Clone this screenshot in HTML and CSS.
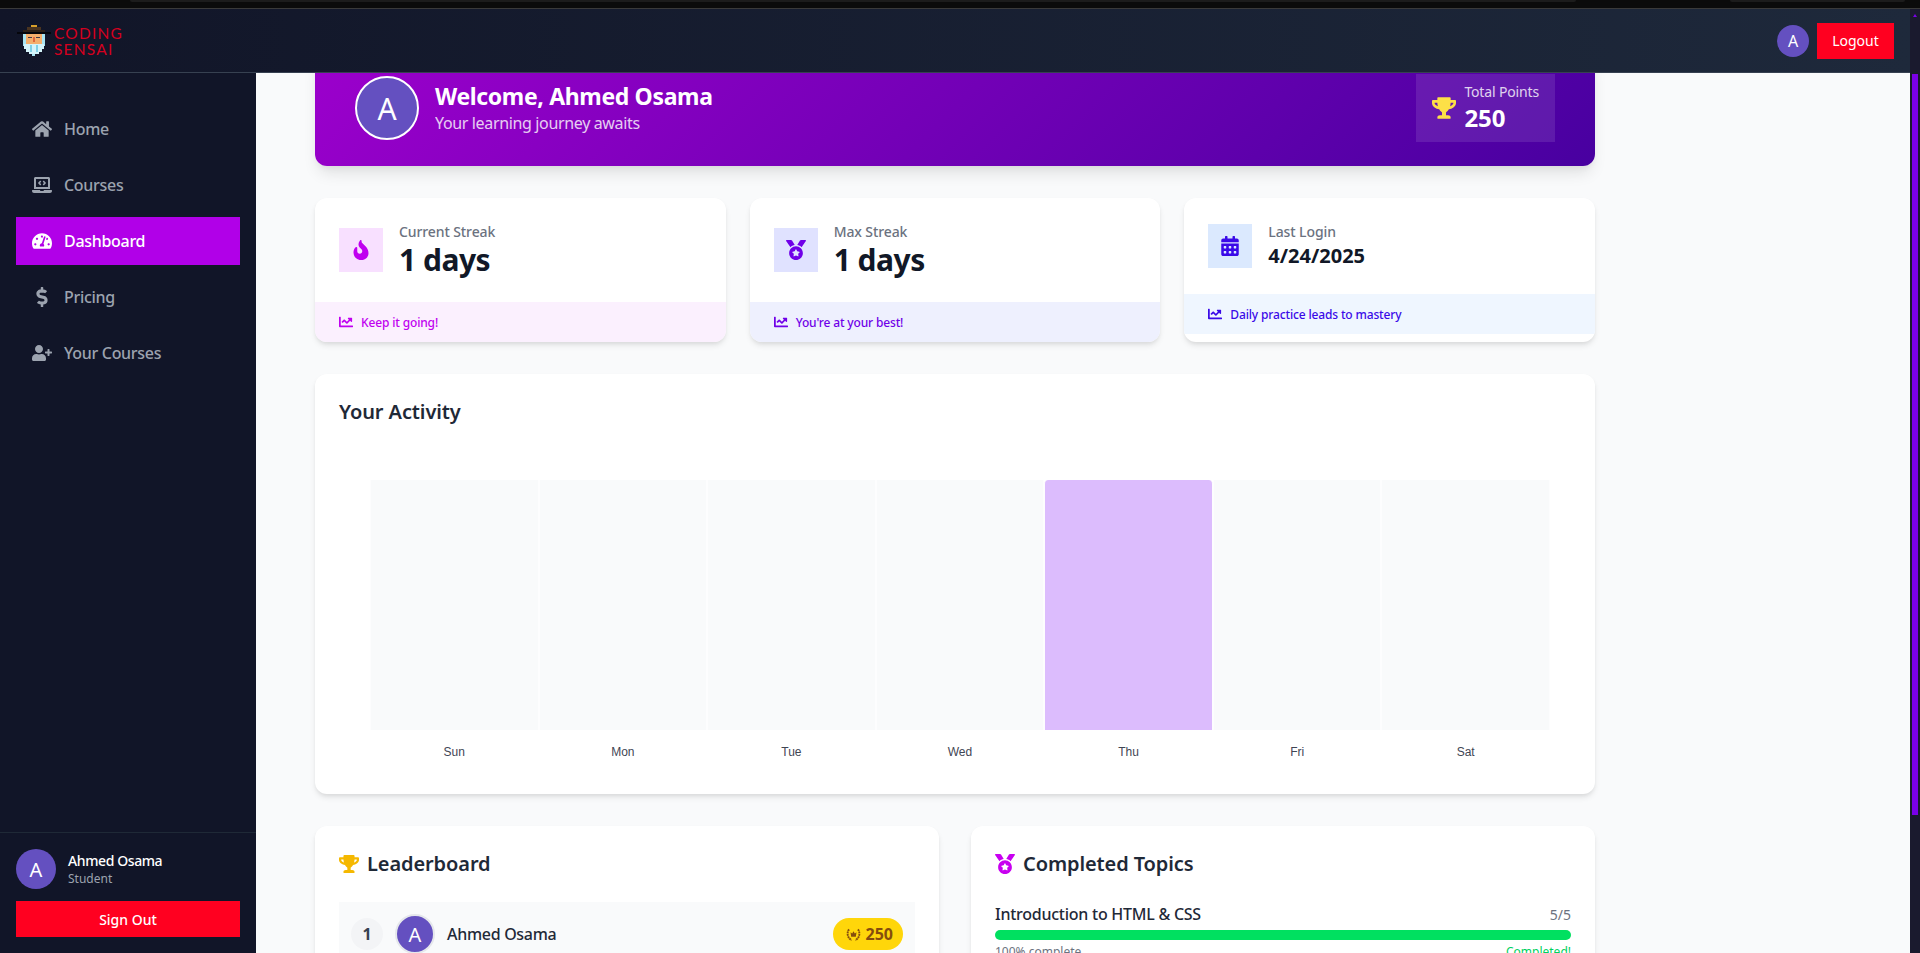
FILE: index.html
```html
<!DOCTYPE html>
<html lang="en">

<head>
    <meta charset="UTF-8">
    <meta name="viewport" content="width=device-width, initial-scale=1.0">
    <title>Coding Sensai - Dashboard</title>
    <link rel="stylesheet" href="styles.css">
</head>

<body>
    <!-- icon sprite -->
    <svg class="sprite" xmlns="http://www.w3.org/2000/svg">
        <symbol id="i-home" viewBox="0 0 576 512"><path d="M280.37 148.26L96 300.11V464a16 16 0 0 0 16 16l112.06-.29a16 16 0 0 0 15.92-16V368a16 16 0 0 1 16-16h64a16 16 0 0 1 16 16v95.64a16 16 0 0 0 16 16.05L464 480a16 16 0 0 0 16-16V300L295.67 148.26a12.19 12.19 0 0 0-15.3 0zM571.6 251.47L488 182.56V44.05a12 12 0 0 0-12-12h-56a12 12 0 0 0-12 12v72.61L318.47 43a48 48 0 0 0-61 0L4.34 251.47a12 12 0 0 0-1.6 16.9l25.5 31A12 12 0 0 0 45.15 301l235.22-193.74a12.19 12.19 0 0 1 15.3 0L530.9 301a12 12 0 0 0 16.9-1.6l25.5-31a12 12 0 0 0-1.7-16.93z"/></symbol>
        <symbol id="i-laptop" viewBox="0 0 640 512"><path d="M255.03 261.65c6.25 6.25 16.38 6.25 22.63 0l11.31-11.31c6.25-6.25 6.25-16.38 0-22.63L253.25 192l35.71-35.72c6.25-6.25 6.25-16.38 0-22.63l-11.31-11.31c-6.25-6.25-16.38-6.25-22.63 0l-58.34 58.34c-6.25 6.25-6.25 16.38 0 22.63l58.35 58.34zm96.01-11.3l11.31 11.31c6.25 6.25 16.38 6.25 22.63 0l58.34-58.34c6.25-6.25 6.25-16.38 0-22.63l-58.34-58.34c-6.25-6.25-16.38-6.25-22.63 0l-11.31 11.31c-6.25 6.25-6.25 16.38 0 22.63L386.75 192l-35.71 35.72c-6.25 6.25-6.25 16.38 0 22.63zM624 416H381.54c-.74 19.81-14.71 32-32.74 32H288c-18.69 0-33.02-17.47-32.77-32H16c-8.8 0-16 7.2-16 16v16c0 35.2 28.8 64 64 64h512c35.2 0 64-28.8 64-64v-16c0-8.8-7.2-16-16-16zM576 48c0-26.4-21.6-48-48-48H112C85.6 0 64 21.6 64 48v336h512V48zm-64 272H128V64h384v256z"/></symbol>
        <symbol id="i-gauge" viewBox="0 0 576 512"><path d="M288 32C128.94 32 0 160.94 0 320c0 52.8 14.25 102.26 39.06 144.8 5.61 9.62 16.3 15.2 27.44 15.2h443c11.14 0 21.83-5.58 27.44-15.2C561.75 422.26 576 372.8 576 320c0-159.06-128.94-288-288-288zm0 64c14.71 0 26.58 10.13 30.32 23.65-1.11 2.26-2.64 4.23-3.45 6.67l-9.22 27.67c-5.13 3.49-10.97 6.01-17.64 6.01-17.67 0-32-14.33-32-32S270.33 96 288 96zM96 384c-17.67 0-32-14.33-32-32s14.33-32 32-32 32 14.33 32 32-14.33 32-32 32zm48-160c-17.67 0-32-14.33-32-32s14.33-32 32-32 32 14.33 32 32-14.33 32-32 32zm246.77-72.41l-61.33 184C343.13 347.33 352 364.54 352 384c0 11.72-3.38 22.55-8.88 32H232.88c-5.5-9.45-8.88-20.28-8.88-32 0-33.94 26.5-61.43 59.9-63.59l61.34-184.01c4.17-12.56 17.73-19.45 30.36-15.17 12.57 4.19 19.35 17.77 15.17 30.36zm14.66 57.2l15.52-46.55c3.47-1.29 7.13-2.23 11.05-2.23 17.67 0 32 14.33 32 32s-14.33 32-32 32c-11.38-.01-20.89-6.28-26.57-15.22zM480 384c-17.67 0-32-14.33-32-32s14.33-32 32-32 32 14.33 32 32-14.33 32-32 32z"/></symbol>
        <symbol id="i-dollar" viewBox="0 0 288 512"><path d="M209.2 233.4l-108-31.6C88.7 198.2 80 186.5 80 173.5c0-16.3 13.2-29.5 29.5-29.5h66.3c12.2 0 24.2 3.7 34.2 10.5 6.1 4.1 14.3 3.1 19.5-2l34.8-34c7.1-6.9 6.1-18.4-1.8-24.5C238 74.8 207.4 64.1 176 64V16c0-8.8-7.2-16-16-16h-32c-8.8 0-16 7.2-16 16v48h-2.5C45.8 64-5.4 118.7.5 183.6c4.2 46.1 39.4 83.6 83.8 96.6l102.5 30c12.5 3.7 21.2 15.3 21.2 28.3 0 16.3-13.2 29.5-29.5 29.5h-66.3C100 368 88 364.3 78 357.5c-6.1-4.1-14.3-3.1-19.5 2l-34.8 34c-7.1 6.9-6.1 18.4 1.8 24.5 24.5 19.2 55.1 29.9 86.5 30v48c0 8.8 7.2 16 16 16h32c8.8 0 16-7.2 16-16v-48.2c46.6-.9 90.3-28.6 105.7-72.7 21.5-61.6-14.6-124.8-72.5-141.7z"/></symbol>
        <symbol id="i-userplus" viewBox="0 0 640 512"><path d="M624 208h-64v-64c0-8.8-7.2-16-16-16h-32c-8.8 0-16 7.2-16 16v64h-64c-8.8 0-16 7.2-16 16v32c0 8.8 7.2 16 16 16h64v64c0 8.8 7.2 16 16 16h32c8.8 0 16-7.2 16-16v-64h64c8.8 0 16-7.2 16-16v-32c0-8.8-7.2-16-16-16zm-400 48c70.7 0 128-57.3 128-128S294.7 0 224 0 96 57.3 96 128s57.3 128 128 128zm89.6 32h-16.7c-22.2 10.2-46.9 16-72.9 16s-50.6-5.8-72.9-16h-16.7C60.2 288 0 348.2 0 422.4V464c0 26.5 21.5 48 48 48h352c26.5 0 48-21.5 48-48v-41.6c0-74.2-60.2-134.4-134.4-134.4z"/></symbol>
        <symbol id="i-trophy" viewBox="0 0 576 512"><path d="M552 64H448V24c0-13.3-10.7-24-24-24H152c-13.3 0-24 10.7-24 24v40H24C10.7 64 0 74.7 0 88v56c0 35.7 22.5 72.4 61.9 100.7 31.5 22.7 69.8 37.1 110 41.7C203.3 338.5 240 360 240 360v72h-48c-35.3 0-64 20.7-64 56v12c0 6.6 5.4 12 12 12h296c6.6 0 12-5.4 12-12v-12c0-35.3-28.7-56-64-56h-48v-72s36.7-21.5 68.1-73.6c40.3-4.6 78.6-19 110-41.7 39.3-28.3 61.9-65 61.9-100.7V88c0-13.3-10.7-24-24-24zM99.3 192.8C74.9 175.2 64 155.6 64 144v-16h64.2c1 32.6 5.8 61.2 12.8 86.2-15.1-5.2-29.2-12.4-41.7-21.4zM512 144c0 16.1-17.7 36.1-35.3 48.8-12.5 9-26.7 16.2-41.8 21.4 7-25 11.8-53.6 12.8-86.2H512v16z"/></symbol>
        <symbol id="i-fire" viewBox="0 0 384 512"><path d="M153.6 29.9l16-21.3C173.6 3.2 180 0 186.7 0C198.4 0 208 9.6 208 21.3V43.500c0 13.100 5.400 25.700 14.900 34.700L307.600 159C356.400 205.600 384 270.200 384 337.700C384 434 306 512 209.700 512H192C86 512 0 426 0 320v-3.800c0-48.800 19.400-95.600 53.900-130.100l3.500-3.500c4.200-4.200 10-6.600 16-6.600C85.900 176 96 186.100 96 198.600V288c0 35.300 28.700 64 64 64s64-28.700 64-64v-3.900c0-18-7.200-35.300-19.900-48l-38.600-38.600c-24-24-37.500-56.700-37.500-90.700c0-27.700 9-54.800 25.600-76.900z"/></symbol>
        <symbol id="i-medal" viewBox="0 0 512 512"><path d="M223.75 130.75L154.62 15.54A31.997 31.997 0 0 0 127.18 0H16.03C3.08 0-4.5 14.57 2.92 25.18l111.27 158.96c29.72-27.77 67.52-46.83 109.56-53.39zM495.97 0H384.82c-11.24 0-21.66 5.9-27.44 15.54l-69.13 115.21c42.04 6.56 79.84 25.62 109.56 53.38L509.08 25.18C516.5 14.57 508.92 0 495.97 0zM256 160c-97.2 0-176 78.8-176 176s78.8 176 176 176 176-78.8 176-176-78.8-176-176-176zm92.52 157.26l-37.93 36.96 8.97 52.22c1.6 9.36-8.26 16.51-16.65 12.09L256 393.88l-46.9 24.65c-8.4 4.45-18.25-2.74-16.65-12.09l8.97-52.22-37.93-36.96c-6.82-6.64-3.05-18.23 6.35-19.59l52.43-7.64 23.43-47.52c1.78-3.57 5.25-5.39 8.71-5.39 3.49 0 6.98 1.85 8.77 5.39l23.43 47.52 52.43 7.64c9.4 1.36 13.17 12.95 6.35 19.59z"/></symbol>
        <symbol id="i-calendar" viewBox="0 0 448 512"><path d="M0 464c0 26.5 21.5 48 48 48h352c26.5 0 48-21.5 48-48V192H0v272zm320-196c0-6.6 5.4-12 12-12h40c6.6 0 12 5.4 12 12v40c0 6.6-5.4 12-12 12h-40c-6.6 0-12-5.4-12-12v-40zm0 128c0-6.6 5.4-12 12-12h40c6.6 0 12 5.4 12 12v40c0 6.6-5.4 12-12 12h-40c-6.6 0-12-5.4-12-12v-40zM192 268c0-6.6 5.4-12 12-12h40c6.6 0 12 5.4 12 12v40c0 6.6-5.4 12-12 12h-40c-6.6 0-12-5.4-12-12v-40zm0 128c0-6.6 5.4-12 12-12h40c6.6 0 12 5.4 12 12v40c0 6.6-5.4 12-12 12h-40c-6.6 0-12-5.4-12-12v-40zM64 268c0-6.6 5.4-12 12-12h40c6.6 0 12 5.4 12 12v40c0 6.6-5.4 12-12 12H76c-6.6 0-12-5.4-12-12v-40zm0 128c0-6.6 5.4-12 12-12h40c6.6 0 12 5.4 12 12v40c0 6.6-5.4 12-12 12H76c-6.6 0-12-5.4-12-12v-40zM400 64h-48V16c0-8.8-7.2-16-16-16h-32c-8.8 0-16 7.2-16 16v48H160V16c0-8.8-7.2-16-16-16h-32c-8.8 0-16 7.2-16 16v48H48C21.5 64 0 85.5 0 112v48h448v-48c0-26.5-21.5-48-48-48z"/></symbol>
        <symbol id="i-chart" viewBox="0 0 512 512"><path d="M496 384H64V80c0-8.84-7.16-16-16-16H16C7.16 64 0 71.16 0 80v336c0 17.67 14.33 32 32 32h464c8.84 0 16-7.16 16-16v-32c0-8.84-7.16-16-16-16zM464 96H345.94c-21.38 0-32.09 25.85-16.97 40.97l32.4 32.4L288 242.75l-73.37-73.37c-12.5-12.5-32.76-12.5-45.25 0l-68.69 68.69c-6.25 6.25-6.25 16.38 0 22.63l22.62 22.62c6.25 6.25 16.38 6.25 22.63 0L192 237.25l73.37 73.37c12.5 12.5 32.76 12.5 45.25 0l96-96 32.4 32.4c15.12 15.12 40.97 4.41 40.97-16.97V112c.01-8.84-7.15-16-15.99-16z"/></symbol>
    </svg>

    <div class="window-strip"><span class="strip-tab"></span><span class="strip-tab short"></span></div>

    <div class="window">
        <div class="app">
            <header class="topbar">
                <a class="logo" href="#">
                    <svg class="logo-mascot" viewBox="0 0 34 31" shape-rendering="crispEdges" aria-hidden="true">
                        <rect x="14" y="0" width="6" height="2" fill="#d9a02b"/>
                        <rect x="10" y="2" width="14" height="3" fill="#4a3420"/>
                        <rect x="6" y="5" width="22" height="3" fill="#2d2118"/>
                        <rect x="0" y="7" width="34" height="2" fill="#05060c"/>
                        <rect x="6" y="9" width="22" height="12" fill="#a8e4f2"/>
                        <rect x="9" y="9" width="16" height="10" fill="#f4ae6c"/>
                        <rect x="11" y="12" width="4" height="1" fill="#3d3a4a"/>
                        <rect x="19" y="12" width="4" height="1" fill="#3d3a4a"/>
                        <rect x="16" y="12" width="2" height="5" fill="#e0683c"/>
                        <rect x="7" y="19" width="20" height="5" fill="#d4f3fa"/>
                        <rect x="9" y="24" width="16" height="3" fill="#d4f3fa"/>
                        <rect x="12" y="27" width="10" height="2" fill="#d4f3fa"/>
                        <rect x="15" y="29" width="3" height="2" fill="#a8e4f2"/>
                        <rect x="13" y="20" width="2" height="7" fill="#7fd0e6"/>
                        <rect x="19" y="20" width="2" height="7" fill="#7fd0e6"/>
                    </svg>
                    <span class="logo-text">CODING<br>SENSAI</span>
                </a>
                <div class="topbar-user">
                    <span class="avatar avatar-sm">A</span>
                    <button class="btn-red btn-logout">Logout</button>
                </div>
            </header>

            <div class="layout">
                <aside class="sidebar">
                    <nav class="side-nav">
                        <a href="#"><svg class="ico"><use href="#i-home"/></svg>Home</a>
                        <a href="#"><svg class="ico"><use href="#i-laptop"/></svg>Courses</a>
                        <a href="#" class="active"><svg class="ico"><use href="#i-gauge"/></svg>Dashboard</a>
                        <a href="#"><svg class="ico"><use href="#i-dollar"/></svg>Pricing</a>
                        <a href="#"><svg class="ico"><use href="#i-userplus"/></svg>Your Courses</a>
                    </nav>
                    <div class="side-footer">
                        <div class="side-user">
                            <span class="avatar avatar-md">A</span>
                            <div>
                                <p class="side-name">Ahmed Osama</p>
                                <p class="side-role">Student</p>
                            </div>
                        </div>
                        <button class="btn-red btn-signout">Sign Out</button>
                    </div>
                </aside>

                <main class="main">
                    <div class="content">
                        <section class="hero">
                            <div class="hero-user">
                                <span class="avatar avatar-lg">A</span>
                                <div>
                                    <h1>Welcome, Ahmed Osama</h1>
                                    <p>Your learning journey awaits</p>
                                </div>
                            </div>
                            <div class="points">
                                <svg class="ico points-ico"><use href="#i-trophy"/></svg>
                                <div>
                                    <p class="points-label">Total Points</p>
                                    <p class="points-value">250</p>
                                </div>
                            </div>
                        </section>

                        <section class="stats">
                            <article class="card stat stat-pink">
                                <div class="stat-body">
                                    <span class="stat-icon"><svg class="ico"><use href="#i-fire"/></svg></span>
                                    <div>
                                        <p class="stat-label">Current Streak</p>
                                        <p class="stat-value">1 days</p>
                                    </div>
                                </div>
                                <div class="stat-foot"><svg class="ico"><use href="#i-chart"/></svg>Keep it going!</div>
                            </article>
                            <article class="card stat stat-violet">
                                <div class="stat-body">
                                    <span class="stat-icon"><svg class="ico"><use href="#i-medal"/></svg></span>
                                    <div>
                                        <p class="stat-label">Max Streak</p>
                                        <p class="stat-value">1 days</p>
                                    </div>
                                </div>
                                <div class="stat-foot"><svg class="ico"><use href="#i-chart"/></svg>You're at your best!</div>
                            </article>
                            <article class="card stat stat-blue">
                                <div class="stat-body">
                                    <span class="stat-icon"><svg class="ico"><use href="#i-calendar"/></svg></span>
                                    <div>
                                        <p class="stat-label">Last Login</p>
                                        <p class="stat-value small">4/24/2025</p>
                                    </div>
                                </div>
                                <div class="stat-foot"><svg class="ico"><use href="#i-chart"/></svg>Daily practice leads to mastery</div>
                            </article>
                        </section>

                        <section class="card activity">
                            <h2>Your Activity</h2>
                            <div class="chart">
                                <div class="chart-col"><div class="bar"></div><span>Sun</span></div>
                                <div class="chart-col"><div class="bar"></div><span>Mon</span></div>
                                <div class="chart-col"><div class="bar"></div><span>Tue</span></div>
                                <div class="chart-col"><div class="bar"></div><span>Wed</span></div>
                                <div class="chart-col"><div class="bar on"></div><span>Thu</span></div>
                                <div class="chart-col"><div class="bar"></div><span>Fri</span></div>
                                <div class="chart-col"><div class="bar"></div><span>Sat</span></div>
                            </div>
                        </section>

                        <section class="bottom">
                            <div class="card panel">
                                <h2><svg class="ico gold"><use href="#i-trophy"/></svg>Leaderboard</h2>
                                <div class="rank-row">
                                    <span class="rank-num">1</span>
                                    <span class="avatar avatar-rank">A</span>
                                    <span class="rank-name">Ahmed Osama</span>
                                    <span class="rank-badge">
                                        <svg class="wreath" viewBox="0 0 16 16" aria-hidden="true">
                                            <path d="M3.2 2.5C.6 6 1.4 11.8 6 14M12.8 2.5C15.4 6 14.6 11.8 10 14" fill="none" stroke="currentColor" stroke-width="2" stroke-dasharray="2 .6"/>
                                            <path d="M4.8 5.5l1.8 1.5L8 4.500 9.400 7l1.800-1.500-.7 5h-5z" fill="currentColor"/>
                                        </svg>250
                                    </span>
                                </div>
                            </div>
                            <div class="card panel">
                                <h2><svg class="ico magenta"><use href="#i-medal"/></svg>Completed Topics</h2>
                                <div class="topic-head">
                                    <span class="topic-name">Introduction to HTML &amp; CSS</span>
                                    <span class="topic-count">5/5</span>
                                </div>
                                <div class="progress"><div class="progress-fill"></div></div>
                                <div class="topic-foot">
                                    <span>100% complete</span>
                                    <span class="done">Completed!</span>
                                </div>
                            </div>
                        </section>
                    </div>
                </main>
            </div>
        </div>

        <div class="scrollbar">
            <span class="scroll-arrow"></span>
            <div class="scroll-thumb"></div>
        </div>
    </div>
</body>

</html>
```

FILE: styles.css
```css
/* General Reset */
* {
    margin: 0;
    padding: 0;
    box-sizing: border-box;
}

html, body {
    height: 100%;
    overflow: hidden;
}

body {
    font-family: "Noto Sans", "Open Sans", sans-serif;
    background: #0a0a0a;
    color: #111827;
    display: flex;
    flex-direction: column;
}

a {
    text-decoration: none;
    color: inherit;
}

button {
    font-family: inherit;
    border: none;
    cursor: pointer;
}

.sprite {
    display: none;
}

.ico {
    display: block;
    width: 20px;
    height: 20px;
    fill: currentColor;
    flex-shrink: 0;
}

/* Top window strip */
.window-strip {
    height: 9px;
    flex-shrink: 0;
    display: flex;
    align-items: flex-start;
    gap: 154px;
    padding-left: 130px;
    background: #0b0b0b;
    border-bottom: 1px solid #3a3a3a;
}

.strip-tab {
    width: 1446px;
    height: 2px;
    background: #1c1c1c;
    border-radius: 0 0 6px 6px;
}

.strip-tab.short {
    width: 175px;
}

.window {
    flex: 1;
    min-height: 0;
    display: flex;
}

.app {
    flex: 1;
    min-width: 0;
    display: flex;
    flex-direction: column;
}

/* Scrollbar */
.scrollbar {
    width: 10px;
    background: #1a1a2e;
    display: flex;
    flex-direction: column;
    align-items: center;
}

.scroll-arrow {
    margin-top: 5px;
    border-left: 2.5px solid transparent;
    border-right: 2.5px solid transparent;
    border-bottom: 3px solid #7a00e8;
}

.scroll-thumb {
    width: 6px;
    height: 741px;
    margin-top: 57px;
    background: #7a00e8;
}

/* Navbar */
.topbar {
    height: 64px;
    flex-shrink: 0;
    display: flex;
    align-items: center;
    justify-content: space-between;
    padding: 0 16px 0 17px;
    background: linear-gradient(to right, #111528, #1e293b);
    border-bottom: 1px solid #374151;
}

.logo {
    display: flex;
    align-items: center;
    gap: 3px;
}

.logo-mascot {
    width: 34px;
    height: 31px;
}

.logo-text {
    font-family: "Lato", sans-serif;
    font-weight: 400;
    font-size: 15.5px;
    line-height: 16px;
    letter-spacing: 1.2px;
    color: #d4001f;
}

.topbar-user {
    display: flex;
    align-items: center;
    gap: 8px;
}

.avatar {
    display: flex;
    align-items: center;
    justify-content: center;
    flex-shrink: 0;
    border-radius: 50%;
    background: #6450c0;
    color: #fff;
}

.avatar-sm {
    width: 32px;
    height: 32px;
    font-size: 16px;
}

.avatar-md {
    width: 40px;
    height: 40px;
    font-size: 20px;
}

.avatar-lg {
    width: 64px;
    height: 64px;
    font-size: 30px;
    border: 2px solid #fff;
}

.avatar-rank {
    width: 40px;
    height: 40px;
    font-size: 20px;
    border: 2px solid #e5e7eb;
}

.btn-red {
    background: #ff0020;
    color: #fff;
    font-size: 14px;
    font-weight: 500;
}

.btn-logout {
    width: 77px;
    height: 36px;
    font-weight: 400;
}

.btn-signout {
    width: 100%;
    height: 36px;
}

/* Layout */
.layout {
    flex: 1;
    min-height: 0;
    display: flex;
}

.sidebar {
    width: 256px;
    flex-shrink: 0;
    background: #111528;
    display: flex;
    flex-direction: column;
    justify-content: space-between;
}

.side-nav {
    padding: 32px 16px;
    display: flex;
    flex-direction: column;
    gap: 8px;
}

.side-nav a {
    height: 48px;
    display: flex;
    align-items: center;
    gap: 12px;
    padding: 0 16px;
    font-size: 16px;
    font-weight: 500;
    letter-spacing: -0.3px;
    color: #9ca3af;
}

.side-nav a.active {
    background: #b100e8;
    color: #fff;
}

.side-footer {
    border-top: 1px solid #1f2937;
    padding: 16px;
}

.side-user {
    display: flex;
    align-items: center;
    gap: 12px;
    margin-bottom: 12px;
}

.side-name {
    font-size: 14px;
    line-height: 20px;
    font-weight: 500;
    letter-spacing: -0.4px;
    color: #fff;
}

.side-role {
    font-size: 12px;
    line-height: 16px;
    color: #9ca3af;
}

/* Main content */
.main {
    flex: 1;
    min-width: 0;
    overflow: hidden;
    background: #f9fafb;
    padding-left: 59px;
}

.content {
    width: 1280px;
    margin-top: -23px; /* page is scrolled a little under the navbar */
    display: flex;
    flex-direction: column;
    gap: 32px;
}

.card {
    background: #fff;
    border-radius: 12px;
    box-shadow: 0 4px 6px -1px rgba(0, 0, 0, 0.1), 0 2px 4px -1px rgba(0, 0, 0, 0.06);
    overflow: hidden;
}

.hero {
    height: 116px;
    flex-shrink: 0;
    display: flex;
    align-items: center;
    justify-content: space-between;
    padding: 0 40px;
    color: #fff;
    border-radius: 12px;
    background: linear-gradient(135deg, #9c00cc, #4800a0);
    box-shadow: 0 10px 15px -3px rgba(0, 0, 0, 0.1), 0 4px 6px -2px rgba(0, 0, 0, 0.05);
}

.hero-user {
    display: flex;
    align-items: center;
    gap: 16px;
}

.hero h1 {
    font-size: 23px;
    line-height: 30px;
    font-weight: 700;
    letter-spacing: -0.35px;
}

.hero p {
    font-size: 16px;
    line-height: 24px;
    letter-spacing: -0.35px;
    opacity: 0.8;
}

.points {
    display: flex;
    align-items: center;
    gap: 8px;
    padding: 8px 16px;
    background: rgba(255, 255, 255, 0.1);
}

.points-ico {
    width: 24px;
    height: 22px;
    color: #fde047;
}

.points .points-label {
    font-size: 14px;
    line-height: 20px;
    letter-spacing: -0.15px;
}

.points .points-value {
    font-size: 24px;
    line-height: 32px;
    font-weight: 700;
    letter-spacing: 0;
    opacity: 1;
}

/* Stat cards */
.stats {
    display: grid;
    grid-template-columns: repeat(3, 1fr);
    gap: 24px;
}

.stat-body {
    display: flex;
    align-items: center;
    gap: 16px;
    padding: 24px;
}

.stat-icon {
    width: 44px;
    height: 44px;
    display: flex;
    align-items: center;
    justify-content: center;
}

.stat-label {
    font-size: 14px;
    line-height: 20px;
    font-weight: 500;
    letter-spacing: -0.1px;
    color: #6b7280;
}

.stat-value {
    font-size: 30px;
    line-height: 36px;
    font-weight: 700;
    letter-spacing: -0.5px;
    color: #111827;
}

.stat-value.small {
    font-size: 20px;
    line-height: 28px;
    letter-spacing: 0;
}

.stat-foot {
    height: 40px;
    display: flex;
    align-items: center;
    gap: 8px;
    padding: 0 24px;
    font-size: 12px;
    font-weight: 500;
    letter-spacing: -0.15px;
}

.stat-foot .ico {
    width: 14px;
    height: 14px;
}

.stat-pink .stat-icon { background: #f8e0ff; color: #c000f0; }
.stat-pink .stat-foot { background: #fbf0fe; color: #c000f0; }
.stat-violet .stat-icon { background: #e0e2ff; color: #7000e8; }
.stat-violet .stat-foot { background: #eef0fe; color: #7000e8; }
.stat-blue .stat-icon { background: #dbe9fe; color: #3a0ae8; }
.stat-blue .stat-foot { background: #eff6ff; color: #3a0ae8; }

/* Activity chart */
.activity {
    height: 420px;
    padding: 24px;
}

.activity h2,
.panel h2 {
    font-size: 20px;
    line-height: 28px;
    font-weight: 600;
    letter-spacing: -0.1px;
    color: #1f2937;
}

.chart {
    display: grid;
    grid-template-columns: repeat(7, 1fr);
    margin-top: 54px;
    padding: 0 21px 0 31px;
}

.chart-col {
    display: flex;
    flex-direction: column;
    align-items: center;
    font-family: "Liberation Sans", Arial, sans-serif;
    font-size: 12px;
    line-height: 16px;
    color: #3f4654;
}

.bar {
    width: 100%;
    height: 250px;
    margin-bottom: 14px;
    background: #f9fafb;
    border-left: 1px solid #fdfdfe;
    border-right: 1px solid #fdfdfe;
}

.bar.on {
    background: #dcbcfd;
    border-radius: 4px 4px 0 0;
}

/* Bottom panels */
.bottom {
    display: grid;
    grid-template-columns: 1fr 1fr;
    gap: 32px;
}

.panel {
    height: 300px;
    padding: 24px;
}

.panel h2 {
    display: flex;
    align-items: center;
    gap: 8px;
    margin-bottom: 24px;
}

.gold {
    color: #f5b800;
}

.magenta {
    color: #c800f0;
}

.rank-row {
    height: 64px;
    display: flex;
    align-items: center;
    padding: 0 12px;
    background: #f9fafb;
}

.rank-num {
    width: 32px;
    height: 32px;
    display: flex;
    align-items: center;
    justify-content: center;
    margin-right: 12px;
    border-radius: 50%;
    background: #f3f4f6;
    font-size: 16px;
    font-weight: 700;
    color: #374151;
}

.rank-name {
    margin-left: 12px;
    font-size: 16px;
    font-weight: 500;
    letter-spacing: -0.3px;
    color: #1f2937;
}

.rank-badge {
    margin-left: auto;
    height: 32px;
    display: flex;
    align-items: center;
    gap: 5px;
    padding: 0 10px 0 13px;
    border-radius: 16px;
    background: #ffd60a;
    font-size: 16px;
    font-weight: 700;
    color: #854d0e;
}

.wreath {
    width: 15px;
    height: 15px;
}

.topic-head,
.topic-foot {
    display: flex;
    justify-content: space-between;
    align-items: center;
}

.topic-name {
    font-size: 16px;
    line-height: 24px;
    font-weight: 500;
    letter-spacing: -0.25px;
    color: #1f2937;
}

.topic-count {
    font-size: 14px;
    color: #6b7280;
}

.progress {
    height: 10px;
    margin-top: 4px;
    border-radius: 5px;
    background: #e5e7eb;
    overflow: hidden;
}

.progress-fill {
    width: 100%;
    height: 100%;
    background: #00e060;
}

.topic-foot {
    margin-top: 4px;
    font-size: 12px;
    line-height: 16px;
    color: #6b7280;
}

.done {
    color: #00d060;
}
```
